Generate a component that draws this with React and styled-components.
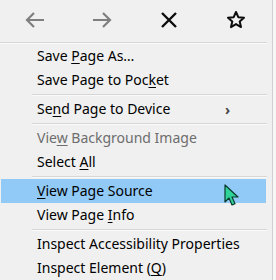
import React from "react";
import styled, { createGlobalStyle } from "styled-components";

const Global = createGlobalStyle`
  html, body {
    margin: 0;
    padding: 0;
    background: #f7f7f7;
  }
  body {
    font-family: "Noto Sans", "Liberation Sans", sans-serif;
  }
`;

const Menu = styled.div`
  width: 272px;
  height: 280px;
  background: #f0f0f0;
  border-right: 1px solid #cfcfcf;
  overflow: hidden;
  position: relative;
`;

const Toolbar = styled.div`
  display: grid;
  grid-template-columns: repeat(4, 67px);
  height: 41px;
  align-items: center;
  justify-items: center;
  padding-left: 1px;
`;

const ToolButton = styled.div`
  width: 24px;
  height: 24px;
  display: flex;
  align-items: center;
  justify-content: center;
  color: ${(p) => (p.$disabled ? "#7f7f7f" : "#0c0c0c")};
  margin-top: -2px;
`;

const Separator = styled.div`
  height: ${(p) => (p.$top ? "3px" : "5px")};
  display: flex;
  align-items: center;
  padding-left: ${(p) => (p.$top ? "0" : "32px")};
  padding-right: 5px;

  &::before {
    content: "";
    flex: 1;
    height: 1px;
    background: #d6d6d6;
    box-shadow: 0 1px 0 #fafafa;
  }
`;

const Item = styled.div`
  height: 24px;
  display: flex;
  align-items: center;
  margin: 0 6px 0 1px;
  padding-left: 36px;
  padding-right: 36px;
  font-size: 14px;
  color: ${(p) => (p.$disabled ? "#6d6d6d" : "#000")};
  background: ${(p) => (p.$active ? "#91c9f7" : "transparent")};
  white-space: nowrap;
`;

const Label = styled.span`
  flex: 1;
  margin-top: -1px;
  u {
    text-decoration: underline;
    text-underline-offset: 2px;
  }
`;

const Chevron = styled.span`
  font-size: 14px;
  font-weight: 700;
  color: #444;
  margin-right: 0;
`;

const Cursor = styled.svg`
  position: absolute;
  left: 224px;
  top: 184px;
`;

const ArrowLeft = () => (
  <svg width="20" height="16" viewBox="0 0 20 16" fill="none" stroke="currentColor" strokeWidth="2.2">
    <path d="M19 8H2M9 1L2 8l7 7" />
  </svg>
);

const ArrowRight = () => (
  <svg width="20" height="16" viewBox="0 0 20 16" fill="none" stroke="currentColor" strokeWidth="2.2">
    <path d="M1 8h17M11 1l7 7-7 7" />
  </svg>
);

const Close = () => (
  <svg width="18" height="18" viewBox="0 0 18 18" fill="none" stroke="currentColor" strokeWidth="2.4">
    <path d="M2 2l14 14M16 2L2 16" />
  </svg>
);

const Star = () => (
  <svg width="20" height="20" viewBox="0 0 20 20" fill="none" stroke="currentColor" strokeWidth="2" strokeLinejoin="round">
    <path d="M10 2l2.3 5.2 5.7.5-4.3 3.8 1.3 5.6L10 14.1 5 17.1l1.3-5.6L2 7.7l5.7-.5z" />
  </svg>
);

export default function App() {
  return (
    <>
      <Global />
      <Menu>
        <Toolbar>
          <ToolButton $disabled><ArrowLeft /></ToolButton>
          <ToolButton $disabled><ArrowRight /></ToolButton>
          <ToolButton><Close /></ToolButton>
          <ToolButton><Star /></ToolButton>
        </Toolbar>
        <Separator $top />
        <Item><Label>Save <u>P</u>age As…</Label></Item>
        <Item><Label>Save Page to Poc<u>k</u>et</Label></Item>
        <Separator />
        <Item><Label>Se<u>n</u>d Page to Device</Label><Chevron>›</Chevron></Item>
        <Separator />
        <Item $disabled><Label>Vie<u>w</u> Background Image</Label></Item>
        <Item><Label>Select <u>A</u>ll</Label></Item>
        <Separator />
        <Item $active><Label><u>V</u>iew Page Source</Label></Item>
        <Item><Label>View Page <u>I</u>nfo</Label></Item>
        <Separator />
        <Item><Label>Inspect Accessibility Properties</Label></Item>
        <Item><Label>Inspect Element (<u>Q</u>)</Label></Item>
        <Cursor width="16" height="22" viewBox="0 0 16 22">
          <path d="M1 1v17l4-4 3 7 3-1.3-3-6.7h6z" fill="#2fd39a" stroke="#0b3b2c" strokeWidth="1.2" strokeLinejoin="round" />
        </Cursor>
      </Menu>
    </>
  );
}
